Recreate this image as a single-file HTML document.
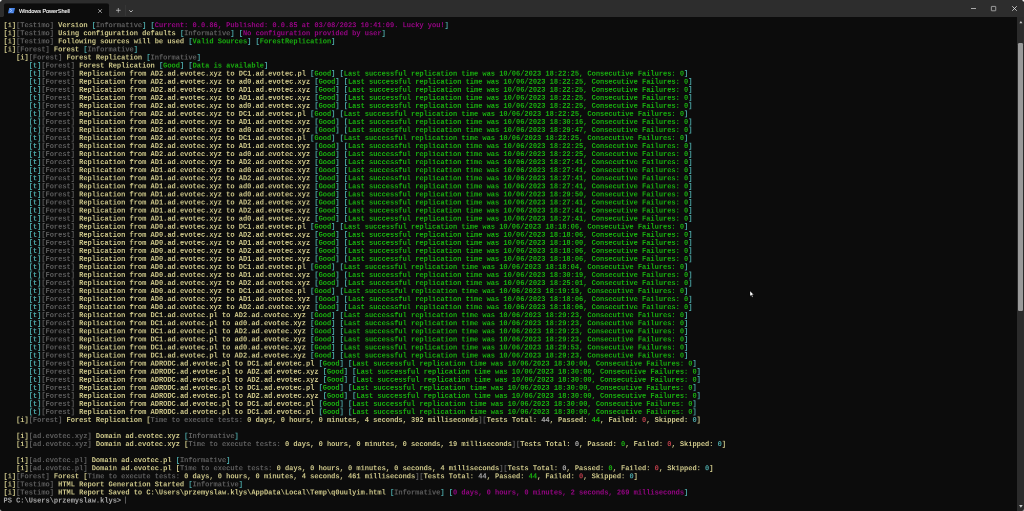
<!DOCTYPE html>
<html><head><meta charset="utf-8"><title>Windows PowerShell</title>
<style>
html,body{margin:0;padding:0;background:#0c0c0c;}
body{width:1024px;height:511px;overflow:hidden;position:relative;font-family:"Liberation Sans",sans-serif;}
#tbar{position:absolute;left:0;top:0;width:1024px;height:17px;background:#2d2d2d;}
#tab{position:absolute;left:4px;top:3px;width:105.1px;height:14.2px;background:linear-gradient(#1a1a1a 0,#1a1a1a 1px,#0c0c0c 1px);border-radius:2.2px 2.2px 0 0;}
#tab:before,#tab:after{content:"";position:absolute;bottom:0;width:2px;height:2px;}
#tab:before{left:-2px;background:radial-gradient(circle at 0 0,transparent 2px,#0c0c0c 2.2px);}
#tab:after{right:-2px;background:radial-gradient(circle at 100% 0,transparent 2px,#0c0c0c 2.2px);}
#ttl{position:absolute;left:19px;top:6.7px;font-size:5.6px;line-height:8px;color:#f4f4f4;white-space:nowrap;letter-spacing:-0.1px;will-change:transform;-webkit-text-stroke:0.12px #f4f4f4;}
#term{position:absolute;left:0;top:0;font-family:"Liberation Mono",monospace;font-size:14px;line-height:16px;font-weight:bold;}
.l{position:absolute;left:0;top:0;height:16px;transform-origin:0 0;white-space:pre;will-change:transform;opacity:0.8;}
.y{color:#F9F1A5}.g{color:#6e6e6e}.c{color:#58C8C8}.m{color:#B4009E}.G{color:#19D40D}.r{color:#E74856}.w{color:#CCCCCC}
.cur{display:inline-block;width:0.09em;height:1em;background:#ccc;vertical-align:-0.15em;}
#sb{position:absolute;left:1017px;top:17px;width:7px;height:494px;background:#2b2b2b;}
#thumb{position:absolute;left:1018.3px;top:43px;width:4.4px;height:268.3px;background:#9a9a9a;border-radius:1.3px;}
svg{position:absolute;overflow:visible}
</style></head><body>
<div id="tbar"></div>
<div id="tab"></div>
<svg style="left:7.9px;top:7.7px" width="7" height="5.3" viewBox="0 0 70 53"><defs><linearGradient id="pg" x1="0" y1="0" x2="1" y2="1"><stop offset="0" stop-color="#5a96f2"/><stop offset="1" stop-color="#346fd8"/></linearGradient></defs><path d="M12 0 H70 L58 53 H0 Z" fill="url(#pg)"/><path d="M20 11 L38 25 L18 40" stroke="#cfe0ff" stroke-width="7" fill="none" opacity="0.85"/><path d="M34 43 H50" stroke="#cfe0ff" stroke-width="6" opacity="0.7"/></svg>
<div id="ttl">Windows PowerShell</div>
<svg style="left:97.5px;top:8.5px" width="4.1" height="4.1" viewBox="0 0 10 10"><path d="M0.5 0.5 L9.5 9.5 M9.5 0.5 L0.5 9.5" stroke="#e6e6e6" stroke-width="1.5" fill="none"/></svg>
<svg style="left:115.7px;top:8.35px" width="4.6" height="4.6" viewBox="0 0 10 10"><path d="M5 0 V10 M0 5 H10" stroke="#d0d0d0" stroke-width="1.5" fill="none"/></svg>
<div style="position:absolute;left:125px;top:5.2px;width:0.6px;height:10.4px;background:#363636"></div>
<svg style="left:129.1px;top:9.6px" width="4" height="2.4" viewBox="0 0 10 6"><path d="M0.7 0.7 L5 5 L9.3 0.7" stroke="#dcdcdc" stroke-width="2" fill="none"/></svg>
<svg style="left:971px;top:8.2px" width="5" height="1" viewBox="0 0 10 2"><path d="M0 1 H10" stroke="#e0e0e0" stroke-width="1.4"/></svg>
<svg style="left:991.1px;top:5.9px" width="5.1" height="5.2" viewBox="0 0 10 10"><rect x="0.7" y="0.7" width="8.6" height="8.6" rx="0.8" stroke="#d4d4d4" stroke-width="1.3" fill="none"/></svg>
<svg style="left:1011.9px;top:6px" width="5" height="5" viewBox="0 0 10 10"><path d="M0.5 0.5 L9.5 9.5 M9.5 0.5 L0.5 9.5" stroke="#e6e6e6" stroke-width="1.6" fill="none"/></svg>
<div id="sb"></div><div id="thumb"></div>
<svg style="left:1018.6px;top:20.9px" width="3.8" height="2.3" viewBox="0 0 8 6"><path d="M4 0 L8 6 H0 Z" fill="#c8c8c8"/></svg>
<svg style="left:1018.6px;top:505.3px" width="3.8" height="2.7" viewBox="0 0 8 6"><path d="M0 0 H8 L4 6 Z" fill="#c8c8c8"/></svg>
<svg style="left:750px;top:290.6px" width="4.4" height="6.4" viewBox="0 0 11 16"><path d="M0 0 L0 13 L3 10 L5.5 15.5 L7.5 14.5 L5 9.5 L9.5 9.5 Z" fill="#fff" stroke="#000" stroke-width="0.8"/></svg>
<div style="position:absolute;left:0;top:0;width:3px;height:3px;background:radial-gradient(circle at 0 0,#f0f0f0 0,#f0f0f0 0.9px,rgba(240,240,240,0) 2.2px)"></div>
<div style="position:absolute;left:1021px;top:0;width:3px;height:3px;background:radial-gradient(circle at 100% 0,#f0f0f0 0,#f0f0f0 0.9px,rgba(240,240,240,0) 2.2px)"></div>
<div style="position:absolute;left:0;top:508px;width:3px;height:3px;background:radial-gradient(circle at 0 100%,#9a9a9a 0,#9a9a9a 0.7px,rgba(154,154,154,0) 1.9px)"></div>
<div style="position:absolute;left:1021px;top:508px;width:3px;height:3px;background:radial-gradient(circle at 100% 100%,#9a9a9a 0,#9a9a9a 0.7px,rgba(154,154,154,0) 1.9px)"></div>
<div id="term">
<div class="l" style="transform:translate(3.5px,21.300px) rotate(0.001deg) scale(0.5)"><span class="y">[i]</span><span class="g">[Testimo] </span><span class="y">Version </span><span class="c">[</span><span class="g">Informative</span><span class="c">]</span><span class="c"> [</span><span class="m">Current: 0.0.86, Published: 0.0.85 at 03/08/2023 10:41:09. Lucky you!</span><span class="c">]</span></div>
<div class="l" style="transform:translate(3.5px,29.355px) rotate(0.001deg) scale(0.5)"><span class="y">[i]</span><span class="g">[Testimo] </span><span class="y">Using configuration defaults </span><span class="c">[</span><span class="g">Informative</span><span class="c">]</span><span class="c"> [</span><span class="m">No configuration provided by user</span><span class="c">]</span></div>
<div class="l" style="transform:translate(3.5px,37.410px) rotate(0.001deg) scale(0.5)"><span class="y">[i]</span><span class="g">[Testimo] </span><span class="y">Following sources will be used </span><span class="c">[</span><span class="G">Valid Sources</span><span class="c">] [</span><span class="G">ForestReplication</span><span class="c">]</span></div>
<div class="l" style="transform:translate(3.5px,45.465px) rotate(0.001deg) scale(0.5)"><span class="y">[i]</span><span class="g">[Forest] </span><span class="y">Forest </span><span class="c">[</span><span class="g">Informative</span><span class="c">]</span></div>
<div class="l" style="transform:translate(3.5px,53.520px) rotate(0.001deg) scale(0.5)"><span class="y">   [i]</span><span class="g">[Forest] </span><span class="y">Forest Replication </span><span class="c">[</span><span class="g">Informative</span><span class="c">]</span></div>
<div class="l" style="transform:translate(3.5px,61.575px) rotate(0.001deg) scale(0.5)"><span class="c">      [t]</span><span class="g">[Forest] </span><span class="y">Forest Replication </span><span class="c">[</span><span class="G">Good</span><span class="c">] [</span><span class="G">Data is available</span><span class="c">]</span></div>
<div class="l" style="transform:translate(3.5px,69.630px) rotate(0.001deg) scale(0.5)"><span class="c">      [t]</span><span class="g">[Forest] </span><span class="y">Replication from AD2.ad.evotec.xyz to DC1.ad.evotec.pl </span><span class="c">[</span><span class="G">Good</span><span class="c">] [</span><span class="G">Last successful replication time was 10/06/2023 18:22:25, Consecutive Failures: 0</span><span class="c">]</span></div>
<div class="l" style="transform:translate(3.5px,77.685px) rotate(0.001deg) scale(0.5)"><span class="c">      [t]</span><span class="g">[Forest] </span><span class="y">Replication from AD2.ad.evotec.xyz to ad0.ad.evotec.xyz </span><span class="c">[</span><span class="G">Good</span><span class="c">] [</span><span class="G">Last successful replication time was 10/06/2023 18:22:25, Consecutive Failures: 0</span><span class="c">]</span></div>
<div class="l" style="transform:translate(3.5px,85.740px) rotate(0.001deg) scale(0.5)"><span class="c">      [t]</span><span class="g">[Forest] </span><span class="y">Replication from AD2.ad.evotec.xyz to AD1.ad.evotec.xyz </span><span class="c">[</span><span class="G">Good</span><span class="c">] [</span><span class="G">Last successful replication time was 10/06/2023 18:22:25, Consecutive Failures: 0</span><span class="c">]</span></div>
<div class="l" style="transform:translate(3.5px,93.795px) rotate(0.001deg) scale(0.5)"><span class="c">      [t]</span><span class="g">[Forest] </span><span class="y">Replication from AD2.ad.evotec.xyz to AD1.ad.evotec.xyz </span><span class="c">[</span><span class="G">Good</span><span class="c">] [</span><span class="G">Last successful replication time was 10/06/2023 18:22:25, Consecutive Failures: 0</span><span class="c">]</span></div>
<div class="l" style="transform:translate(3.5px,101.850px) rotate(0.001deg) scale(0.5)"><span class="c">      [t]</span><span class="g">[Forest] </span><span class="y">Replication from AD2.ad.evotec.xyz to ad0.ad.evotec.xyz </span><span class="c">[</span><span class="G">Good</span><span class="c">] [</span><span class="G">Last successful replication time was 10/06/2023 18:22:25, Consecutive Failures: 0</span><span class="c">]</span></div>
<div class="l" style="transform:translate(3.5px,109.905px) rotate(0.001deg) scale(0.5)"><span class="c">      [t]</span><span class="g">[Forest] </span><span class="y">Replication from AD2.ad.evotec.xyz to DC1.ad.evotec.pl </span><span class="c">[</span><span class="G">Good</span><span class="c">] [</span><span class="G">Last successful replication time was 10/06/2023 18:22:25, Consecutive Failures: 0</span><span class="c">]</span></div>
<div class="l" style="transform:translate(3.5px,117.960px) rotate(0.001deg) scale(0.5)"><span class="c">      [t]</span><span class="g">[Forest] </span><span class="y">Replication from AD2.ad.evotec.xyz to AD1.ad.evotec.xyz </span><span class="c">[</span><span class="G">Good</span><span class="c">] [</span><span class="G">Last successful replication time was 10/06/2023 18:30:16, Consecutive Failures: 0</span><span class="c">]</span></div>
<div class="l" style="transform:translate(3.5px,126.015px) rotate(0.001deg) scale(0.5)"><span class="c">      [t]</span><span class="g">[Forest] </span><span class="y">Replication from AD2.ad.evotec.xyz to ad0.ad.evotec.xyz </span><span class="c">[</span><span class="G">Good</span><span class="c">] [</span><span class="G">Last successful replication time was 10/06/2023 18:29:47, Consecutive Failures: 0</span><span class="c">]</span></div>
<div class="l" style="transform:translate(3.5px,134.070px) rotate(0.001deg) scale(0.5)"><span class="c">      [t]</span><span class="g">[Forest] </span><span class="y">Replication from AD2.ad.evotec.xyz to DC1.ad.evotec.pl </span><span class="c">[</span><span class="G">Good</span><span class="c">] [</span><span class="G">Last successful replication time was 10/06/2023 18:22:25, Consecutive Failures: 0</span><span class="c">]</span></div>
<div class="l" style="transform:translate(3.5px,142.125px) rotate(0.001deg) scale(0.5)"><span class="c">      [t]</span><span class="g">[Forest] </span><span class="y">Replication from AD2.ad.evotec.xyz to AD1.ad.evotec.xyz </span><span class="c">[</span><span class="G">Good</span><span class="c">] [</span><span class="G">Last successful replication time was 10/06/2023 18:22:25, Consecutive Failures: 0</span><span class="c">]</span></div>
<div class="l" style="transform:translate(3.5px,150.180px) rotate(0.001deg) scale(0.5)"><span class="c">      [t]</span><span class="g">[Forest] </span><span class="y">Replication from AD2.ad.evotec.xyz to ad0.ad.evotec.xyz </span><span class="c">[</span><span class="G">Good</span><span class="c">] [</span><span class="G">Last successful replication time was 10/06/2023 18:22:25, Consecutive Failures: 0</span><span class="c">]</span></div>
<div class="l" style="transform:translate(3.5px,158.235px) rotate(0.001deg) scale(0.5)"><span class="c">      [t]</span><span class="g">[Forest] </span><span class="y">Replication from AD1.ad.evotec.xyz to AD2.ad.evotec.xyz </span><span class="c">[</span><span class="G">Good</span><span class="c">] [</span><span class="G">Last successful replication time was 10/06/2023 18:27:41, Consecutive Failures: 0</span><span class="c">]</span></div>
<div class="l" style="transform:translate(3.5px,166.290px) rotate(0.001deg) scale(0.5)"><span class="c">      [t]</span><span class="g">[Forest] </span><span class="y">Replication from AD1.ad.evotec.xyz to ad0.ad.evotec.xyz </span><span class="c">[</span><span class="G">Good</span><span class="c">] [</span><span class="G">Last successful replication time was 10/06/2023 18:27:41, Consecutive Failures: 0</span><span class="c">]</span></div>
<div class="l" style="transform:translate(3.5px,174.345px) rotate(0.001deg) scale(0.5)"><span class="c">      [t]</span><span class="g">[Forest] </span><span class="y">Replication from AD1.ad.evotec.xyz to AD2.ad.evotec.xyz </span><span class="c">[</span><span class="G">Good</span><span class="c">] [</span><span class="G">Last successful replication time was 10/06/2023 18:27:41, Consecutive Failures: 0</span><span class="c">]</span></div>
<div class="l" style="transform:translate(3.5px,182.400px) rotate(0.001deg) scale(0.5)"><span class="c">      [t]</span><span class="g">[Forest] </span><span class="y">Replication from AD1.ad.evotec.xyz to ad0.ad.evotec.xyz </span><span class="c">[</span><span class="G">Good</span><span class="c">] [</span><span class="G">Last successful replication time was 10/06/2023 18:27:41, Consecutive Failures: 0</span><span class="c">]</span></div>
<div class="l" style="transform:translate(3.5px,190.455px) rotate(0.001deg) scale(0.5)"><span class="c">      [t]</span><span class="g">[Forest] </span><span class="y">Replication from AD1.ad.evotec.xyz to ad0.ad.evotec.xyz </span><span class="c">[</span><span class="G">Good</span><span class="c">] [</span><span class="G">Last successful replication time was 10/06/2023 18:29:50, Consecutive Failures: 0</span><span class="c">]</span></div>
<div class="l" style="transform:translate(3.5px,198.510px) rotate(0.001deg) scale(0.5)"><span class="c">      [t]</span><span class="g">[Forest] </span><span class="y">Replication from AD1.ad.evotec.xyz to AD2.ad.evotec.xyz </span><span class="c">[</span><span class="G">Good</span><span class="c">] [</span><span class="G">Last successful replication time was 10/06/2023 18:27:41, Consecutive Failures: 0</span><span class="c">]</span></div>
<div class="l" style="transform:translate(3.5px,206.565px) rotate(0.001deg) scale(0.5)"><span class="c">      [t]</span><span class="g">[Forest] </span><span class="y">Replication from AD1.ad.evotec.xyz to AD2.ad.evotec.xyz </span><span class="c">[</span><span class="G">Good</span><span class="c">] [</span><span class="G">Last successful replication time was 10/06/2023 18:27:41, Consecutive Failures: 0</span><span class="c">]</span></div>
<div class="l" style="transform:translate(3.5px,214.620px) rotate(0.001deg) scale(0.5)"><span class="c">      [t]</span><span class="g">[Forest] </span><span class="y">Replication from AD1.ad.evotec.xyz to ad0.ad.evotec.xyz </span><span class="c">[</span><span class="G">Good</span><span class="c">] [</span><span class="G">Last successful replication time was 10/06/2023 18:27:41, Consecutive Failures: 0</span><span class="c">]</span></div>
<div class="l" style="transform:translate(3.5px,222.675px) rotate(0.001deg) scale(0.5)"><span class="c">      [t]</span><span class="g">[Forest] </span><span class="y">Replication from AD0.ad.evotec.xyz to DC1.ad.evotec.pl </span><span class="c">[</span><span class="G">Good</span><span class="c">] [</span><span class="G">Last successful replication time was 10/06/2023 18:18:06, Consecutive Failures: 0</span><span class="c">]</span></div>
<div class="l" style="transform:translate(3.5px,230.730px) rotate(0.001deg) scale(0.5)"><span class="c">      [t]</span><span class="g">[Forest] </span><span class="y">Replication from AD0.ad.evotec.xyz to AD2.ad.evotec.xyz </span><span class="c">[</span><span class="G">Good</span><span class="c">] [</span><span class="G">Last successful replication time was 10/06/2023 18:18:06, Consecutive Failures: 0</span><span class="c">]</span></div>
<div class="l" style="transform:translate(3.5px,238.785px) rotate(0.001deg) scale(0.5)"><span class="c">      [t]</span><span class="g">[Forest] </span><span class="y">Replication from AD0.ad.evotec.xyz to AD1.ad.evotec.xyz </span><span class="c">[</span><span class="G">Good</span><span class="c">] [</span><span class="G">Last successful replication time was 10/06/2023 18:18:00, Consecutive Failures: 0</span><span class="c">]</span></div>
<div class="l" style="transform:translate(3.5px,246.840px) rotate(0.001deg) scale(0.5)"><span class="c">      [t]</span><span class="g">[Forest] </span><span class="y">Replication from AD0.ad.evotec.xyz to AD2.ad.evotec.xyz </span><span class="c">[</span><span class="G">Good</span><span class="c">] [</span><span class="G">Last successful replication time was 10/06/2023 18:18:06, Consecutive Failures: 0</span><span class="c">]</span></div>
<div class="l" style="transform:translate(3.5px,254.895px) rotate(0.001deg) scale(0.5)"><span class="c">      [t]</span><span class="g">[Forest] </span><span class="y">Replication from AD0.ad.evotec.xyz to AD1.ad.evotec.xyz </span><span class="c">[</span><span class="G">Good</span><span class="c">] [</span><span class="G">Last successful replication time was 10/06/2023 18:18:06, Consecutive Failures: 0</span><span class="c">]</span></div>
<div class="l" style="transform:translate(3.5px,262.950px) rotate(0.001deg) scale(0.5)"><span class="c">      [t]</span><span class="g">[Forest] </span><span class="y">Replication from AD0.ad.evotec.xyz to DC1.ad.evotec.pl </span><span class="c">[</span><span class="G">Good</span><span class="c">] [</span><span class="G">Last successful replication time was 10/06/2023 18:18:04, Consecutive Failures: 0</span><span class="c">]</span></div>
<div class="l" style="transform:translate(3.5px,271.005px) rotate(0.001deg) scale(0.5)"><span class="c">      [t]</span><span class="g">[Forest] </span><span class="y">Replication from AD0.ad.evotec.xyz to AD1.ad.evotec.xyz </span><span class="c">[</span><span class="G">Good</span><span class="c">] [</span><span class="G">Last successful replication time was 10/06/2023 18:30:19, Consecutive Failures: 0</span><span class="c">]</span></div>
<div class="l" style="transform:translate(3.5px,279.060px) rotate(0.001deg) scale(0.5)"><span class="c">      [t]</span><span class="g">[Forest] </span><span class="y">Replication from AD0.ad.evotec.xyz to AD2.ad.evotec.xyz </span><span class="c">[</span><span class="G">Good</span><span class="c">] [</span><span class="G">Last successful replication time was 10/06/2023 18:25:01, Consecutive Failures: 0</span><span class="c">]</span></div>
<div class="l" style="transform:translate(3.5px,287.115px) rotate(0.001deg) scale(0.5)"><span class="c">      [t]</span><span class="g">[Forest] </span><span class="y">Replication from AD0.ad.evotec.xyz to DC1.ad.evotec.pl </span><span class="c">[</span><span class="G">Good</span><span class="c">] [</span><span class="G">Last successful replication time was 10/06/2023 18:19:19, Consecutive Failures: 0</span><span class="c">]</span></div>
<div class="l" style="transform:translate(3.5px,295.170px) rotate(0.001deg) scale(0.5)"><span class="c">      [t]</span><span class="g">[Forest] </span><span class="y">Replication from AD0.ad.evotec.xyz to AD1.ad.evotec.xyz </span><span class="c">[</span><span class="G">Good</span><span class="c">] [</span><span class="G">Last successful replication time was 10/06/2023 18:18:06, Consecutive Failures: 0</span><span class="c">]</span></div>
<div class="l" style="transform:translate(3.5px,303.225px) rotate(0.001deg) scale(0.5)"><span class="c">      [t]</span><span class="g">[Forest] </span><span class="y">Replication from AD0.ad.evotec.xyz to AD2.ad.evotec.xyz </span><span class="c">[</span><span class="G">Good</span><span class="c">] [</span><span class="G">Last successful replication time was 10/06/2023 18:18:06, Consecutive Failures: 0</span><span class="c">]</span></div>
<div class="l" style="transform:translate(3.5px,311.280px) rotate(0.001deg) scale(0.5)"><span class="c">      [t]</span><span class="g">[Forest] </span><span class="y">Replication from DC1.ad.evotec.pl to AD2.ad.evotec.xyz </span><span class="c">[</span><span class="G">Good</span><span class="c">] [</span><span class="G">Last successful replication time was 10/06/2023 18:29:23, Consecutive Failures: 0</span><span class="c">]</span></div>
<div class="l" style="transform:translate(3.5px,319.335px) rotate(0.001deg) scale(0.5)"><span class="c">      [t]</span><span class="g">[Forest] </span><span class="y">Replication from DC1.ad.evotec.pl to ad0.ad.evotec.xyz </span><span class="c">[</span><span class="G">Good</span><span class="c">] [</span><span class="G">Last successful replication time was 10/06/2023 18:29:23, Consecutive Failures: 0</span><span class="c">]</span></div>
<div class="l" style="transform:translate(3.5px,327.390px) rotate(0.001deg) scale(0.5)"><span class="c">      [t]</span><span class="g">[Forest] </span><span class="y">Replication from DC1.ad.evotec.pl to AD2.ad.evotec.xyz </span><span class="c">[</span><span class="G">Good</span><span class="c">] [</span><span class="G">Last successful replication time was 10/06/2023 18:29:23, Consecutive Failures: 0</span><span class="c">]</span></div>
<div class="l" style="transform:translate(3.5px,335.445px) rotate(0.001deg) scale(0.5)"><span class="c">      [t]</span><span class="g">[Forest] </span><span class="y">Replication from DC1.ad.evotec.pl to ad0.ad.evotec.xyz </span><span class="c">[</span><span class="G">Good</span><span class="c">] [</span><span class="G">Last successful replication time was 10/06/2023 18:29:23, Consecutive Failures: 0</span><span class="c">]</span></div>
<div class="l" style="transform:translate(3.5px,343.500px) rotate(0.001deg) scale(0.5)"><span class="c">      [t]</span><span class="g">[Forest] </span><span class="y">Replication from DC1.ad.evotec.pl to ad0.ad.evotec.xyz </span><span class="c">[</span><span class="G">Good</span><span class="c">] [</span><span class="G">Last successful replication time was 10/06/2023 18:29:53, Consecutive Failures: 0</span><span class="c">]</span></div>
<div class="l" style="transform:translate(3.5px,351.555px) rotate(0.001deg) scale(0.5)"><span class="c">      [t]</span><span class="g">[Forest] </span><span class="y">Replication from DC1.ad.evotec.pl to AD2.ad.evotec.xyz </span><span class="c">[</span><span class="G">Good</span><span class="c">] [</span><span class="G">Last successful replication time was 10/06/2023 18:29:23, Consecutive Failures: 0</span><span class="c">]</span></div>
<div class="l" style="transform:translate(3.5px,359.610px) rotate(0.001deg) scale(0.5)"><span class="c">      [t]</span><span class="g">[Forest] </span><span class="y">Replication from ADRODC.ad.evotec.pl to DC1.ad.evotec.pl </span><span class="c">[</span><span class="G">Good</span><span class="c">] [</span><span class="G">Last successful replication time was 10/06/2023 18:30:00, Consecutive Failures: 0</span><span class="c">]</span></div>
<div class="l" style="transform:translate(3.5px,367.665px) rotate(0.001deg) scale(0.5)"><span class="c">      [t]</span><span class="g">[Forest] </span><span class="y">Replication from ADRODC.ad.evotec.pl to AD2.ad.evotec.xyz </span><span class="c">[</span><span class="G">Good</span><span class="c">] [</span><span class="G">Last successful replication time was 10/06/2023 18:30:00, Consecutive Failures: 0</span><span class="c">]</span></div>
<div class="l" style="transform:translate(3.5px,375.720px) rotate(0.001deg) scale(0.5)"><span class="c">      [t]</span><span class="g">[Forest] </span><span class="y">Replication from ADRODC.ad.evotec.pl to AD2.ad.evotec.xyz </span><span class="c">[</span><span class="G">Good</span><span class="c">] [</span><span class="G">Last successful replication time was 10/06/2023 18:30:00, Consecutive Failures: 0</span><span class="c">]</span></div>
<div class="l" style="transform:translate(3.5px,383.775px) rotate(0.001deg) scale(0.5)"><span class="c">      [t]</span><span class="g">[Forest] </span><span class="y">Replication from ADRODC.ad.evotec.pl to DC1.ad.evotec.pl </span><span class="c">[</span><span class="G">Good</span><span class="c">] [</span><span class="G">Last successful replication time was 10/06/2023 18:30:00, Consecutive Failures: 0</span><span class="c">]</span></div>
<div class="l" style="transform:translate(3.5px,391.830px) rotate(0.001deg) scale(0.5)"><span class="c">      [t]</span><span class="g">[Forest] </span><span class="y">Replication from ADRODC.ad.evotec.pl to AD2.ad.evotec.xyz </span><span class="c">[</span><span class="G">Good</span><span class="c">] [</span><span class="G">Last successful replication time was 10/06/2023 18:30:00, Consecutive Failures: 0</span><span class="c">]</span></div>
<div class="l" style="transform:translate(3.5px,399.885px) rotate(0.001deg) scale(0.5)"><span class="c">      [t]</span><span class="g">[Forest] </span><span class="y">Replication from ADRODC.ad.evotec.pl to DC1.ad.evotec.pl </span><span class="c">[</span><span class="G">Good</span><span class="c">] [</span><span class="G">Last successful replication time was 10/06/2023 18:30:00, Consecutive Failures: 0</span><span class="c">]</span></div>
<div class="l" style="transform:translate(3.5px,407.940px) rotate(0.001deg) scale(0.5)"><span class="c">      [t]</span><span class="g">[Forest] </span><span class="y">Replication from ADRODC.ad.evotec.pl to DC1.ad.evotec.pl </span><span class="c">[</span><span class="G">Good</span><span class="c">] [</span><span class="G">Last successful replication time was 10/06/2023 18:30:00, Consecutive Failures: 0</span><span class="c">]</span></div>
<div class="l" style="transform:translate(3.5px,415.995px) rotate(0.001deg) scale(0.5)"><span class="y">   [i]</span><span class="g">[Forest] </span><span class="y">Forest Replication </span><span class="y">[</span><span class="g">Time to execute tests: </span><span class="y">0 days, 0 hours, 0 minutes, 4 seconds, 392 milliseconds</span><span class="g">][</span><span class="y">Tests Total: </span><span class="w">44</span><span class="y">, Passed: </span><span class="G">44</span><span class="y">, Failed: </span><span class="r">0</span><span class="y">, Skipped: </span><span class="c">0</span><span class="y">]</span></div>
<div class="l" style="transform:translate(3.5px,432.105px) rotate(0.001deg) scale(0.5)"><span class="y">   [i]</span><span class="g">[ad.evotec.xyz] </span><span class="y">Domain ad.evotec.xyz </span><span class="c">[</span><span class="g">Informative</span><span class="c">]</span></div>
<div class="l" style="transform:translate(3.5px,440.160px) rotate(0.001deg) scale(0.5)"><span class="y">   [i]</span><span class="g">[ad.evotec.xyz] </span><span class="y">Domain ad.evotec.xyz </span><span class="y">[</span><span class="g">Time to execute tests: </span><span class="y">0 days, 0 hours, 0 minutes, 0 seconds, 19 milliseconds</span><span class="g">][</span><span class="y">Tests Total: </span><span class="w">0</span><span class="y">, Passed: </span><span class="G">0</span><span class="y">, Failed: </span><span class="r">0</span><span class="y">, Skipped: </span><span class="c">0</span><span class="y">]</span></div>
<div class="l" style="transform:translate(3.5px,456.270px) rotate(0.001deg) scale(0.5)"><span class="y">   [i]</span><span class="g">[ad.evotec.pl] </span><span class="y">Domain ad.evotec.pl </span><span class="c">[</span><span class="g">Informative</span><span class="c">]</span></div>
<div class="l" style="transform:translate(3.5px,464.325px) rotate(0.001deg) scale(0.5)"><span class="y">   [i]</span><span class="g">[ad.evotec.pl] </span><span class="y">Domain ad.evotec.pl </span><span class="y">[</span><span class="g">Time to execute tests: </span><span class="y">0 days, 0 hours, 0 minutes, 0 seconds, 4 milliseconds</span><span class="g">][</span><span class="y">Tests Total: </span><span class="w">0</span><span class="y">, Passed: </span><span class="G">0</span><span class="y">, Failed: </span><span class="r">0</span><span class="y">, Skipped: </span><span class="c">0</span><span class="y">]</span></div>
<div class="l" style="transform:translate(3.5px,472.380px) rotate(0.001deg) scale(0.5)"><span class="y">[i]</span><span class="g">[Forest] </span><span class="y">Forest </span><span class="y">[</span><span class="g">Time to execute tests: </span><span class="y">0 days, 0 hours, 0 minutes, 4 seconds, 461 milliseconds</span><span class="g">][</span><span class="y">Tests Total: </span><span class="w">44</span><span class="y">, Passed: </span><span class="G">44</span><span class="y">, Failed: </span><span class="r">0</span><span class="y">, Skipped: </span><span class="c">0</span><span class="y">]</span></div>
<div class="l" style="transform:translate(3.5px,480.435px) rotate(0.001deg) scale(0.5)"><span class="y">[i]</span><span class="g">[Testimo] </span><span class="y">HTML Report Generation Started </span><span class="c">[</span><span class="g">Informative</span><span class="c">]</span></div>
<div class="l" style="transform:translate(3.5px,488.490px) rotate(0.001deg) scale(0.5)"><span class="y">[i]</span><span class="g">[Testimo] </span><span class="y">HTML Report Saved to C:\Users\przemyslaw.klys\AppData\Local\Temp\q0uulyim.html </span><span class="c">[</span><span class="g">Informative</span><span class="c">]</span><span class="c"> [</span><span class="m">0 days, 0 hours, 0 minutes, 2 seconds, 269 milliseconds</span><span class="c">]</span></div>
<div class="l" style="transform:translate(3.5px,496.545px) rotate(0.001deg) scale(0.5)"><span class="w">PS C:\Users\przemyslaw.klys&gt; </span><i class="cur"></i></div>
</div>
</body></html>
